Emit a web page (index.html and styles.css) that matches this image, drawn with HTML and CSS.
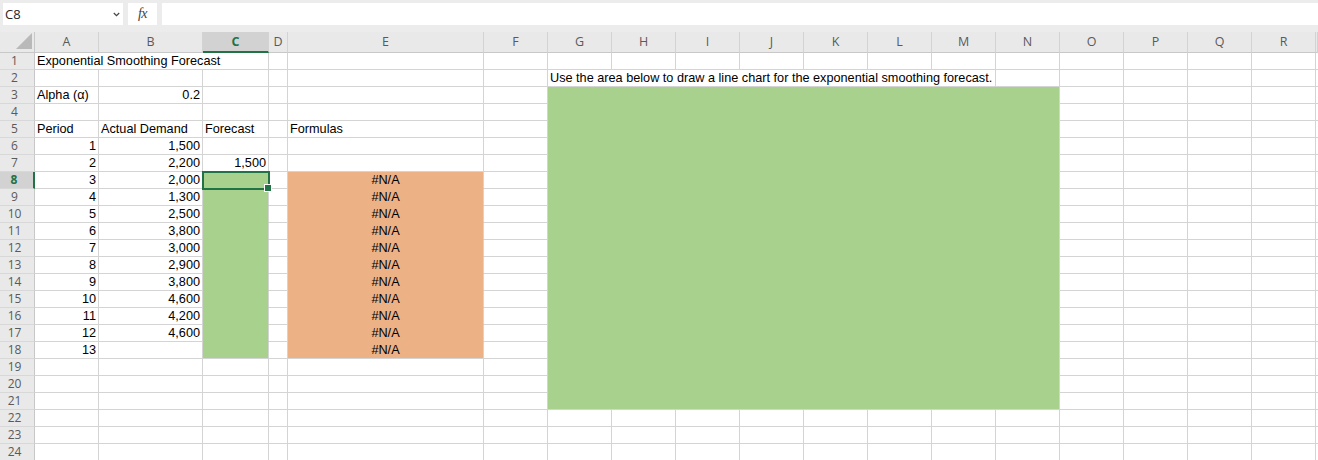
FILE: index.html
```html
<!DOCTYPE html>
<html lang="en">
<head>
<meta charset="utf-8">
<title>Exponential Smoothing Forecast</title>
<link rel="stylesheet" href="styles.css">
</head>
<body>
<div class="app">
  <div class="fbar">
    <div class="namebox"><span class="nb-text">C8</span><svg class="chev" width="7" height="5" viewBox="0 0 7 5"><path d="M0.8 1 L3.5 3.7 L6.2 1" fill="none" stroke="#444" stroke-width="1.2"/></svg></div>
    <div class="fxbox"><span class="fx">fx</span></div>
    <div class="finput"></div>
  </div>
  <div class="sheet">
    <div class="corner"><svg width="16" height="16" viewBox="0 0 16 16"><path d="M16 0 L16 16 L0 16 Z" fill="#b9b9b9"/></svg></div>
    <div class="ch">A</div><div class="ch">B</div><div class="ch ch-sel">C</div><div class="ch">D</div><div class="ch">E</div><div class="ch">F</div>
    <div class="ch">G</div><div class="ch">H</div><div class="ch">I</div><div class="ch">J</div><div class="ch">K</div><div class="ch">L</div>
    <div class="ch">M</div><div class="ch">N</div><div class="ch">O</div><div class="ch">P</div><div class="ch">Q</div><div class="ch">R</div>
    <div class="ch"></div>

    <div class="chart"></div>

    <!-- row 1: title(A-C), D E F, G-R, S -->
    <div class="rh">1</div><div class="title">Exponential Smoothing Forecast</div>
    <div></div><div></div><div></div><div></div>
    <div></div><div></div><div></div><div></div>
    <div></div><div></div><div></div><div></div>
    <div></div><div></div><div></div><div></div>

    <!-- row 2: A-F, note(G-M), N O P Q R S -->
    <div class="rh">2</div>
    <div></div><div></div><div></div>
    <div></div><div></div><div></div>
    <div class="note">Use the area below to draw a line chart for the exponential smoothing forecast.</div>
    <div></div><div></div><div></div>
    <div></div><div></div><div></div>

    <!-- row 3 -->
    <div class="rh">3</div><div>Alpha (α)</div><div class="r">0.2</div>
    <div></div><div></div><div></div><div></div>
    <div></div><div></div><div></div><div></div><div></div>

    <!-- row 4 -->
    <div class="rh">4</div>
    <div></div><div></div><div></div>
    <div></div><div></div><div></div>
    <div></div><div></div><div></div><div></div><div></div>

    <!-- row 5 -->
    <div class="rh">5</div><div>Period</div><div>Actual Demand</div><div>Forecast</div><div></div><div>Formulas</div><div></div>
    <div></div><div></div><div></div><div></div><div></div>

    <!-- row 6 -->
    <div class="rh">6</div><div class="r">1</div><div class="r">1,500</div>
    <div></div><div></div><div></div><div></div>
    <div></div><div></div><div></div><div></div><div></div>

    <!-- row 7 -->
    <div class="rh">7</div><div class="r">2</div><div class="r">2,200</div><div class="r">1,500</div>
    <div></div><div></div><div></div>
    <div></div><div></div><div></div><div></div><div></div>

    <!-- row 8 -->
    <div class="rh rh-sel">8</div><div class="r">3</div><div class="r">2,000</div><div class="g active"></div><div></div><div class="o">#N/A</div><div></div>
    <div></div><div></div><div></div><div></div><div></div>

    <!-- row 9 -->
    <div class="rh">9</div><div class="r">4</div><div class="r">1,300</div><div class="g"></div><div></div><div class="o">#N/A</div><div></div>
    <div></div><div></div><div></div><div></div><div></div>

    <!-- row 10 -->
    <div class="rh">10</div><div class="r">5</div><div class="r">2,500</div><div class="g"></div><div></div><div class="o">#N/A</div><div></div>
    <div></div><div></div><div></div><div></div><div></div>

    <!-- row 11 -->
    <div class="rh">11</div><div class="r">6</div><div class="r">3,800</div><div class="g"></div><div></div><div class="o">#N/A</div><div></div>
    <div></div><div></div><div></div><div></div><div></div>

    <!-- row 12 -->
    <div class="rh">12</div><div class="r">7</div><div class="r">3,000</div><div class="g"></div><div></div><div class="o">#N/A</div><div></div>
    <div></div><div></div><div></div><div></div><div></div>

    <!-- row 13 -->
    <div class="rh">13</div><div class="r">8</div><div class="r">2,900</div><div class="g"></div><div></div><div class="o">#N/A</div><div></div>
    <div></div><div></div><div></div><div></div><div></div>

    <!-- row 14 -->
    <div class="rh">14</div><div class="r">9</div><div class="r">3,800</div><div class="g"></div><div></div><div class="o">#N/A</div><div></div>
    <div></div><div></div><div></div><div></div><div></div>

    <!-- row 15 -->
    <div class="rh">15</div><div class="r">10</div><div class="r">4,600</div><div class="g"></div><div></div><div class="o">#N/A</div><div></div>
    <div></div><div></div><div></div><div></div><div></div>

    <!-- row 16 -->
    <div class="rh">16</div><div class="r">11</div><div class="r">4,200</div><div class="g"></div><div></div><div class="o">#N/A</div><div></div>
    <div></div><div></div><div></div><div></div><div></div>

    <!-- row 17 -->
    <div class="rh">17</div><div class="r">12</div><div class="r">4,600</div><div class="g"></div><div></div><div class="o">#N/A</div><div></div>
    <div></div><div></div><div></div><div></div><div></div>

    <!-- row 18 -->
    <div class="rh">18</div><div class="r">13</div><div></div><div class="g g-last"></div><div></div><div class="o o-last">#N/A</div><div></div>
    <div></div><div></div><div></div><div></div><div></div>

    <!-- row 19 -->
    <div class="rh">19</div>
    <div></div><div></div><div></div>
    <div></div><div></div><div></div>
    <div></div><div></div><div></div><div></div><div></div>

    <!-- row 20 -->
    <div class="rh">20</div>
    <div></div><div></div><div></div>
    <div></div><div></div><div></div>
    <div></div><div></div><div></div><div></div><div></div>

    <!-- row 21 -->
    <div class="rh">21</div>
    <div></div><div></div><div></div>
    <div></div><div></div><div></div>
    <div></div><div></div><div></div><div></div><div></div>

    <!-- row 22 -->
    <div class="rh">22</div>
    <div></div><div></div><div></div><div></div><div></div><div></div>
    <div></div><div></div><div></div><div></div><div></div><div></div>
    <div></div><div></div><div></div><div></div><div></div><div></div>
    <div></div>

    <!-- row 23 -->
    <div class="rh">23</div>
    <div></div><div></div><div></div><div></div><div></div><div></div>
    <div></div><div></div><div></div><div></div><div></div><div></div>
    <div></div><div></div><div></div><div></div><div></div><div></div>
    <div></div>

    <!-- row 24 -->
    <div class="rh">24</div>
    <div></div><div></div><div></div><div></div><div></div><div></div>
    <div></div><div></div><div></div><div></div><div></div><div></div>
    <div></div><div></div><div></div><div></div><div></div><div></div>
    <div></div>
  </div>
</div>
</body>
</html>
```
FILE: styles.css
```css
* { box-sizing: border-box; }
html, body { margin: 0; padding: 0; background: #ffffff; }
body { width: 1318px; height: 460px; overflow: hidden; }

.app { display: flex; flex-direction: column; width: 1318px; }

.fbar {
  height: 32px;
  background: #ececec;
  display: flex;
  align-items: flex-start;
  padding: 3px 0 0 3px;
}
.namebox {
  width: 120px;
  height: 22px;
  background: #ffffff;
  display: flex;
  align-items: center;
  justify-content: space-between;
  padding: 0 3px 0 2px;
  font-family: "Open Sans", "Noto Sans", sans-serif;
  font-size: 13px;
  color: #262626;
}
.nb-text { line-height: 22px; }
.chev { margin-top: 1px; }
.fxbox {
  width: 29px;
  height: 22px;
  margin-left: 5px;
  background: #ffffff;
  display: flex;
  align-items: center;
  justify-content: center;
}
.fx {
  font-family: "Liberation Serif", "DejaVu Serif", serif;
  font-style: italic;
  font-size: 14px;
  color: #444;
  letter-spacing: -0.5px;
}
.finput {
  flex: 1;
  height: 22px;
  margin-left: 5px;
  background: #ffffff;
}

.sheet {
  display: grid;
  grid-template-columns: 35px 64px 104px 66px 19px 196px 64px repeat(12, 64px) 2px;
  grid-template-rows: 21px repeat(24, 17px);
  font-family: "Liberation Sans", Arial, sans-serif;
  font-size: 12.7px;
  color: #000;
}
.sheet > div {
  border-right: 1px solid #d4d4d4;
  border-bottom: 1px solid #d4d4d4;
  line-height: 16px;
  padding: 0 2px;
  white-space: nowrap;
  overflow: visible;
}

.sheet > .corner {
  background: #e9e9e9;
  border-right: 1px solid #c8c8c8;
  border-bottom: 1px solid #c8c8c8;
  display: flex;
  align-items: flex-end;
  justify-content: flex-end;
  padding: 0 2px 3px 0;
}
.sheet > .ch {
  background: #e9e9e9;
  border-right: 1px solid #d3d3d3;
  border-bottom: 1px solid #c8c8c8;
  text-align: center;
  font-family: "Open Sans", "Noto Sans", sans-serif;
  font-size: 12.5px;
  line-height: 20px;
  color: #5a5a5a;
  padding: 0;
}
.sheet > .ch-sel {
  background: #d2d2d2;
  border-bottom: 2px solid #217346;
  color: #217346;
  font-weight: 700;
  line-height: 19px;
}
.sheet > .rh {
  grid-column: 1;
  background: #e9e9e9;
  border-right: 1px solid #c8c8c8;
  border-bottom: 1px solid #d8d8d8;
  text-align: center;
  font-family: "Open Sans", "Noto Sans", sans-serif;
  font-size: 12px;
  line-height: 16px;
  color: #5a5a5a;
  padding: 0 5px 0 0;
}
.sheet > .rh-sel {
  background: #d2d2d2;
  border-right: 2px solid #217346;
  color: #217346;
  font-weight: 700;
}

.sheet > .title { grid-column: span 3; }
.sheet > .note { grid-column: span 7; }
.sheet > .r { text-align: right; }

.sheet > .g {
  background: #a9d18e;
  border-bottom-color: #a9d18e;
}
.sheet > .g-last { border-bottom-color: #d4d4d4; }
.sheet > .o {
  background: #edb186;
  border-bottom-color: #edb186;
  text-align: center;
}
.sheet > .o-last { border-bottom-color: #d4d4d4; }

.sheet > .chart {
  grid-column: 8 / 16;
  grid-row: 4 / 23;
  background: #a9d18e;
  border-right: 1px solid #d4d4d4;
  border-bottom: 1px solid #d4d4d4;
}

.sheet > .active { position: relative; }
.active::after {
  content: "";
  position: absolute;
  top: -1px;
  left: -1px;
  right: -2px;
  bottom: -2px;
  border: 2px solid #217346;
  z-index: 2;
}
.active::before {
  content: "";
  position: absolute;
  right: -4px;
  bottom: -4px;
  width: 6px;
  height: 6px;
  background: #217346;
  border: 1px solid #ffffff;
  z-index: 3;
}
```
